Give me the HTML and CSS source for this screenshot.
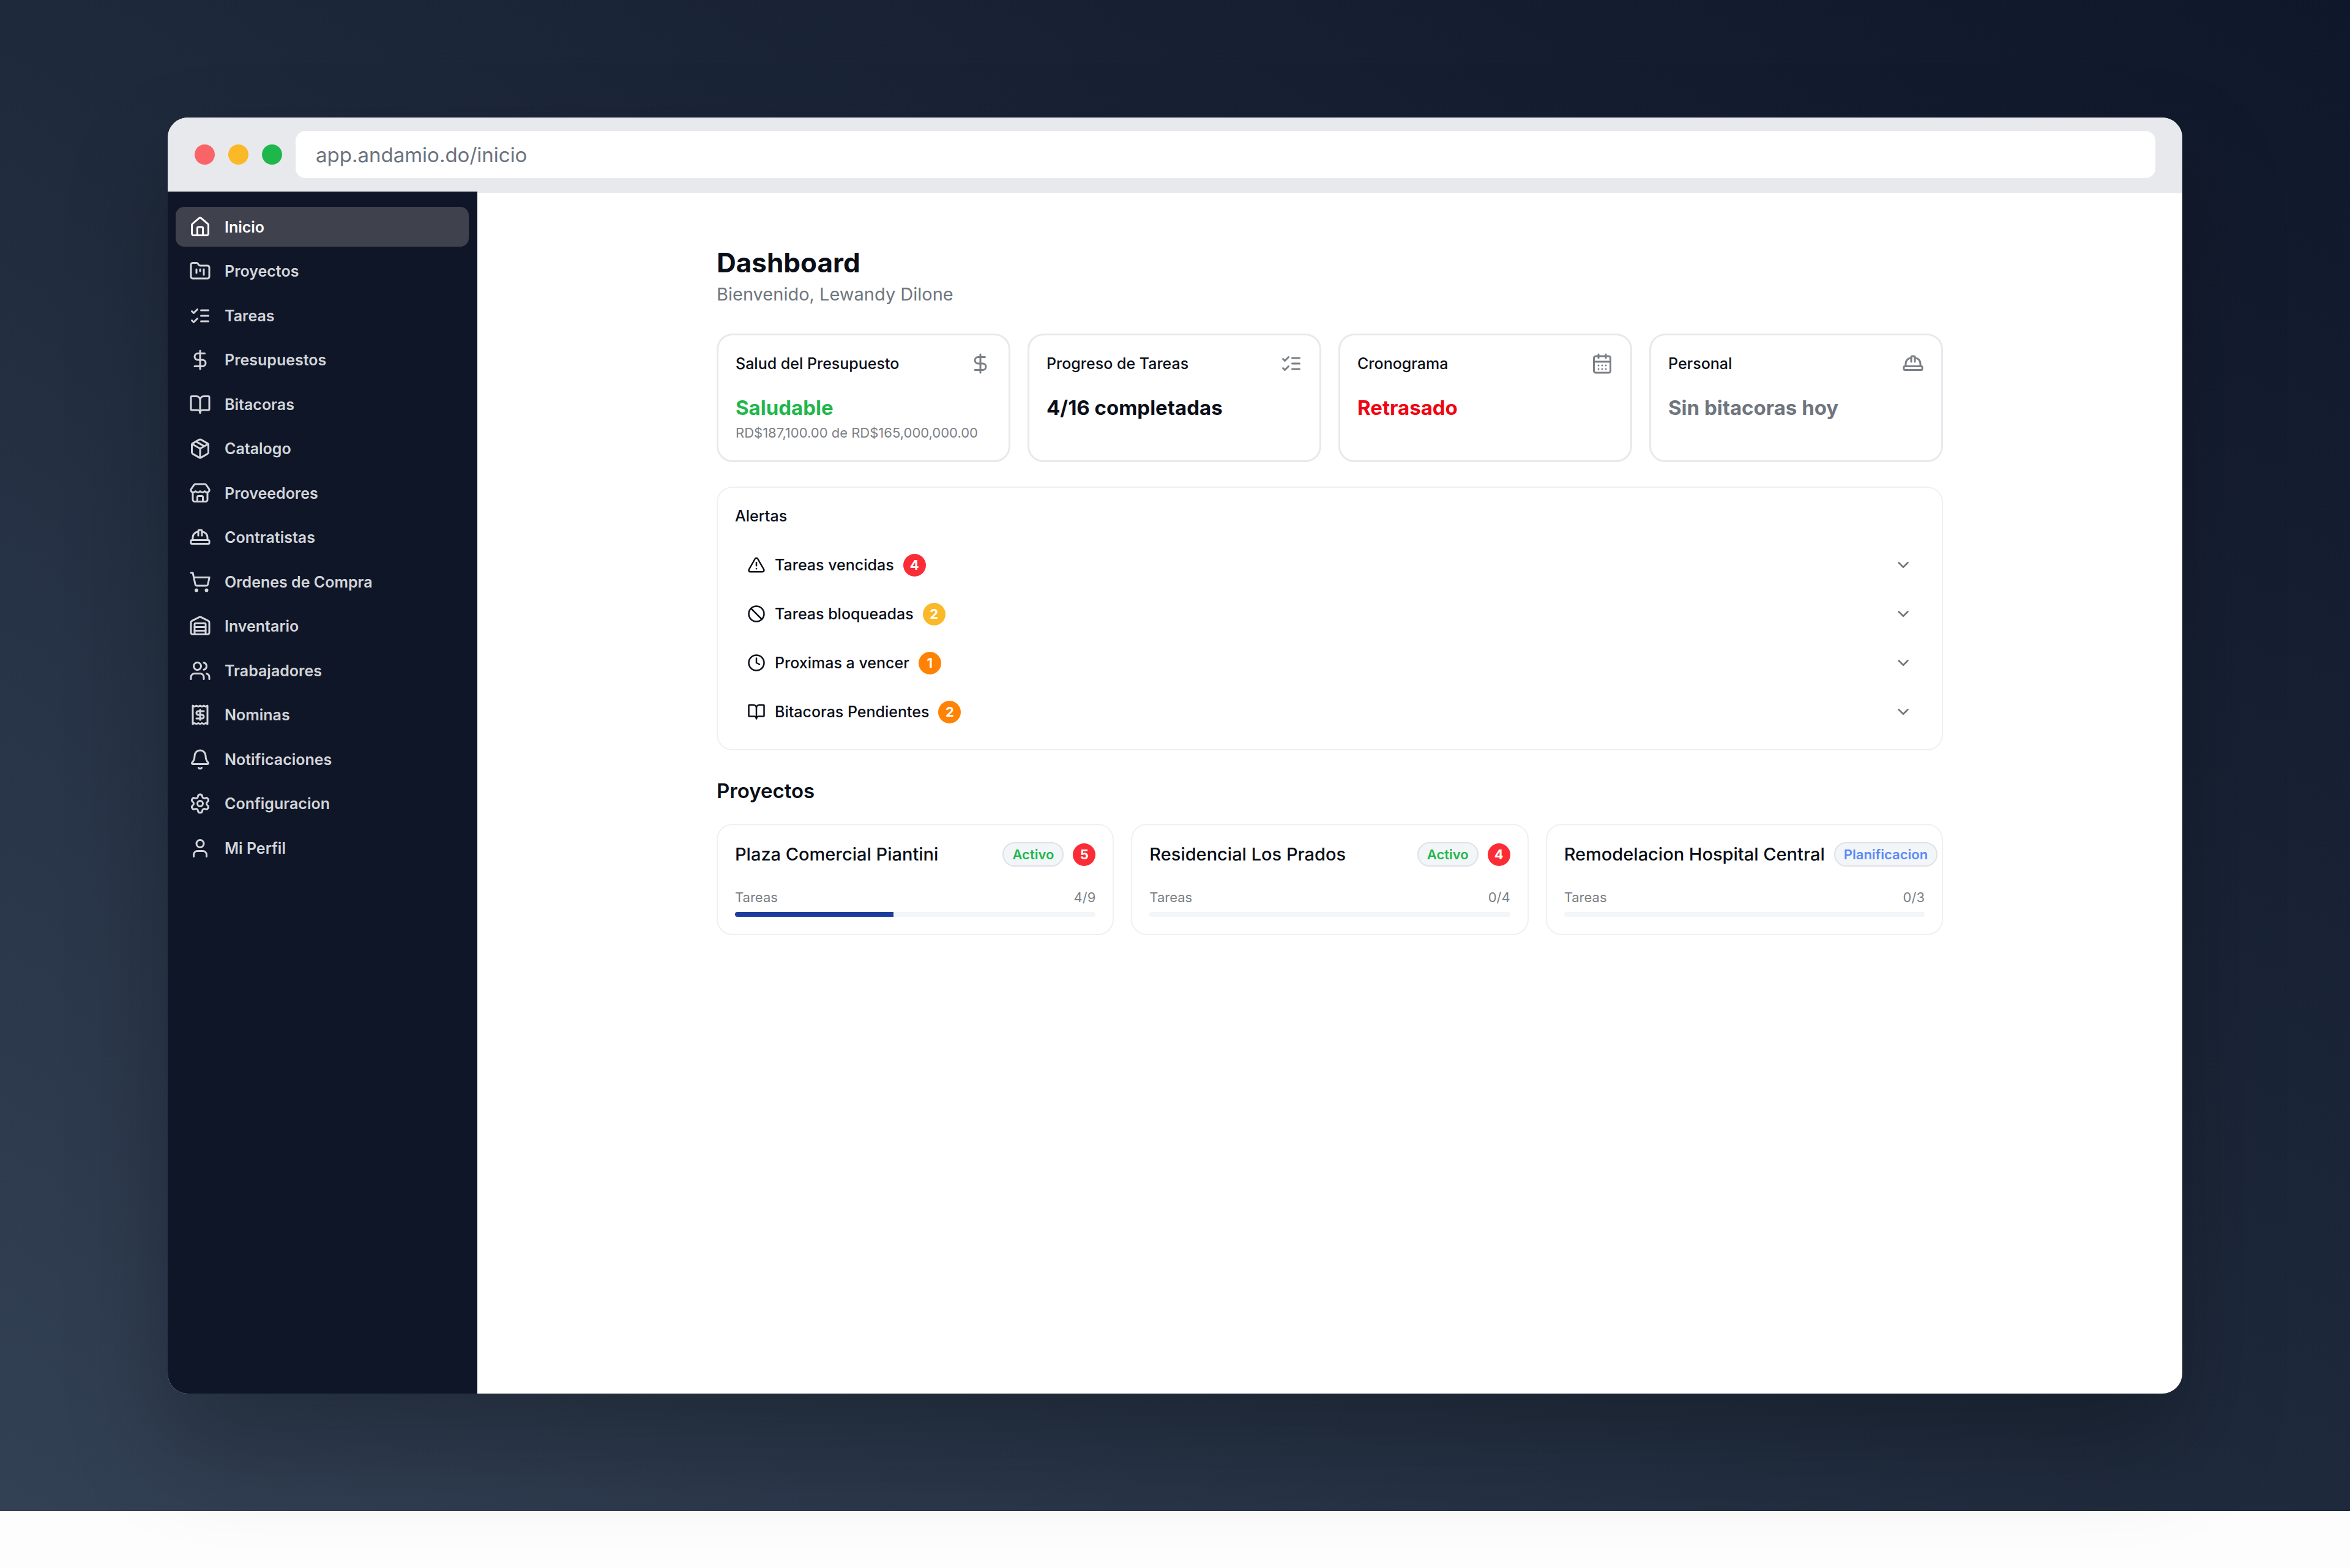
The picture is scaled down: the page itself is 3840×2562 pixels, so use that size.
FILE: index.html
```html
<!DOCTYPE html>
<html lang="es">
<head>
  <meta charset="UTF-8">
  <meta name="viewport" content="width=device-width, initial-scale=1.0">
  <title>Andamio - Inicio</title>
  <link rel="stylesheet" href="styles.css">
</head>
<body>
  <!-- Iconos compartidos -->
  <svg class="sprite" aria-hidden="true">
    <symbol id="i-house" viewBox="0 0 24 24"><path d="M15 21v-8a1 1 0 0 0-1-1h-4a1 1 0 0 0-1 1v8"/><path d="M3 10a2 2 0 0 1 .709-1.528l7-5.999a2 2 0 0 1 2.582 0l7 5.999A2 2 0 0 1 21 10v9a2 2 0 0 1-2 2H5a2 2 0 0 1-2-2z"/></symbol>
    <symbol id="i-folder" viewBox="0 0 24 24"><path d="M4 20h16a2 2 0 0 0 2-2V8a2 2 0 0 0-2-2h-7.93a2 2 0 0 1-1.66-.9l-.82-1.2A2 2 0 0 0 7.93 3H4a2 2 0 0 0-2 2v13c0 1.1.9 2 2 2Z"/><path d="M8 10v4"/><path d="M12 10v2"/><path d="M16 10v6"/></symbol>
    <symbol id="i-list" viewBox="0 0 24 24"><path d="m3 17 2 2 4-4"/><path d="m3 7 2 2 4-4"/><path d="M13 6h8"/><path d="M13 12h8"/><path d="M13 18h8"/></symbol>
    <symbol id="i-dollar" viewBox="0 0 24 24"><path d="M12 2v20"/><path d="M17 5H9.500a3.500 3.500 0 0 0 0 7h5a3.500 3.500 0 0 1 0 7H6"/></symbol>
    <symbol id="i-book" viewBox="0 0 24 24"><path d="M12 7v14"/><path d="M3 18a1 1 0 0 1-1-1V4a1 1 0 0 1 1-1h5a4 4 0 0 1 4 4 4 4 0 0 1 4-4h5a1 1 0 0 1 1 1v13a1 1 0 0 1-1 1h-6a3 3 0 0 0-3 3 3 3 0 0 0-3-3z"/></symbol>
    <symbol id="i-package" viewBox="0 0 24 24"><path d="M11 21.730a2 2 0 0 0 2 0l7-4A2 2 0 0 0 21 16V8a2 2 0 0 0-1-1.730l-7-4a2 2 0 0 0-2 0l-7 4A2 2 0 0 0 3 8v8a2 2 0 0 0 1 1.730z"/><path d="M12 22V12"/><path d="m3.300 7 8.700 5 8.700-5"/><path d="m7.500 4.270 9 5.150"/></symbol>
    <symbol id="i-store" viewBox="0 0 24 24"><path d="M15 21v-5a1 1 0 0 0-1-1h-4a1 1 0 0 0-1 1v5"/><path d="M17.774 10.310a1.120 1.120 0 0 0-1.549 0 2.500 2.500 0 0 1-3.451 0 1.120 1.120 0 0 0-1.548 0 2.500 2.500 0 0 1-3.452 0 1.120 1.120 0 0 0-1.549 0 2.500 2.500 0 0 1-3.770-3.248l2.889-4.184A2 2 0 0 1 7 2h10a2 2 0 0 1 1.653.873l2.895 4.192a2.500 2.500 0 0 1-3.774 3.244"/><path d="M4 10.950V19a2 2 0 0 0 2 2h12a2 2 0 0 0 2-2v-8.050"/></symbol>
    <symbol id="i-hat" viewBox="0 0 24 24"><path d="M10 10V5a1 1 0 0 1 1-1h2a1 1 0 0 1 1 1v5"/><path d="M14 6a6 6 0 0 1 6 6v3"/><path d="M4 15v-3a6 6 0 0 1 6-6"/><rect x="2" y="15" width="20" height="4" rx="1"/></symbol>
    <symbol id="i-cart" viewBox="0 0 24 24"><circle cx="8" cy="21" r="1"/><circle cx="19" cy="21" r="1"/><path d="M2.050 2.050h2l2.660 12.420a2 2 0 0 0 2 1.580h9.780a2 2 0 0 0 1.950-1.570l1.650-7.430H5.120"/></symbol>
    <symbol id="i-warehouse" viewBox="0 0 24 24"><path d="M18 21V10a1 1 0 0 0-1-1H7a1 1 0 0 0-1 1v11"/><path d="M22 19a2 2 0 0 1-2 2H4a2 2 0 0 1-2-2V8a2 2 0 0 1 1.132-1.803l7.950-3.974a2 2 0 0 1 1.837 0l7.948 3.974A2 2 0 0 1 22 8z"/><path d="M6 13h12"/><path d="M6 17h12"/></symbol>
    <symbol id="i-users" viewBox="0 0 24 24"><path d="M16 21v-2a4 4 0 0 0-4-4H6a4 4 0 0 0-4 4v2"/><path d="M16 3.128a4 4 0 0 1 0 7.744"/><path d="M22 21v-2a4 4 0 0 0-3-3.870"/><circle cx="9" cy="7" r="4"/></symbol>
    <symbol id="i-receipt" viewBox="0 0 24 24"><path d="M4 2v20l2-1 2 1 2-1 2 1 2-1 2 1 2-1 2 1V2l-2 1-2-1-2 1-2-1-2 1-2-1-2 1Z"/><path d="M16 8h-6a2 2 0 1 0 0 4h4a2 2 0 1 1 0 4H8"/><path d="M12 17.500v-11"/></symbol>
    <symbol id="i-bell" viewBox="0 0 24 24"><path d="M10.268 21a2 2 0 0 0 3.464 0"/><path d="M3.262 15.326A1 1 0 0 0 4 17h16a1 1 0 0 0 .740-1.673C19.410 13.956 18 12.499 18 8A6 6 0 0 0 6 8c0 4.499-1.411 5.956-2.738 7.326"/></symbol>
    <symbol id="i-gear" viewBox="0 0 24 24"><path d="M9.671 4.136a2.340 2.340 0 0 1 4.659 0 2.340 2.340 0 0 0 3.319 1.915 2.340 2.340 0 0 1 2.330 4.033 2.340 2.340 0 0 0 0 3.831 2.340 2.340 0 0 1-2.330 4.033 2.340 2.340 0 0 0-3.319 1.915 2.340 2.340 0 0 1-4.659 0 2.340 2.340 0 0 0-3.320-1.915 2.340 2.340 0 0 1-2.330-4.033 2.340 2.340 0 0 0 0-3.831A2.340 2.340 0 0 1 6.350 6.051a2.340 2.340 0 0 0 3.319-1.915"/><circle cx="12" cy="12" r="3"/></symbol>
    <symbol id="i-user" viewBox="0 0 24 24"><path d="M19 21v-2a4 4 0 0 0-4-4H9a4 4 0 0 0-4 4v2"/><circle cx="12" cy="7" r="4"/></symbol>
    <symbol id="i-calendar" viewBox="0 0 24 24"><path d="M8 2v4"/><path d="M16 2v4"/><rect x="3" y="4" width="18" height="18" rx="2"/><path d="M3 10h18"/><path d="M8 14h.01"/><path d="M12 14h.01"/><path d="M16 14h.01"/><path d="M8 18h.01"/><path d="M12 18h.01"/><path d="M16 18h.01"/></symbol>
    <symbol id="i-alert" viewBox="0 0 24 24"><path d="m21.730 18-8-14a2 2 0 0 0-3.480 0l-8 14A2 2 0 0 0 4 21h16a2 2 0 0 0 1.730-3"/><path d="M12 9v4"/><path d="M12 17h.01"/></symbol>
    <symbol id="i-ban" viewBox="0 0 24 24"><circle cx="12" cy="12" r="10"/><path d="m4.900 4.900 14.200 14.200"/></symbol>
    <symbol id="i-clock" viewBox="0 0 24 24"><circle cx="12" cy="12" r="10"/><path d="M12 6v6l4 2"/></symbol>
    <symbol id="i-chevron" viewBox="0 0 24 24"><path d="m6 9 6 6 6-6"/></symbol>
  </svg>

  <div class="stage">
    <div class="window">
      <div class="titlebar">
        <span class="dot red"></span>
        <span class="dot yellow"></span>
        <span class="dot green"></span>
        <input class="address" type="text" aria-label="Direccion" value="app.andamio.do/inicio">
      </div>

      <div class="app">
        <nav class="sidebar">
          <ul class="nav-list">
            <li><a class="nav-link active" href="#"><svg class="icon"><use href="#i-house"/></svg>Inicio</a></li>
            <li><a class="nav-link" href="#"><svg class="icon"><use href="#i-folder"/></svg>Proyectos</a></li>
            <li><a class="nav-link" href="#"><svg class="icon"><use href="#i-list"/></svg>Tareas</a></li>
            <li><a class="nav-link" href="#"><svg class="icon"><use href="#i-dollar"/></svg>Presupuestos</a></li>
            <li><a class="nav-link" href="#"><svg class="icon"><use href="#i-book"/></svg>Bitacoras</a></li>
            <li><a class="nav-link" href="#"><svg class="icon"><use href="#i-package"/></svg>Catalogo</a></li>
            <li><a class="nav-link" href="#"><svg class="icon"><use href="#i-store"/></svg>Proveedores</a></li>
            <li><a class="nav-link" href="#"><svg class="icon"><use href="#i-hat"/></svg>Contratistas</a></li>
            <li><a class="nav-link" href="#"><svg class="icon"><use href="#i-cart"/></svg>Ordenes de Compra</a></li>
            <li><a class="nav-link" href="#"><svg class="icon"><use href="#i-warehouse"/></svg>Inventario</a></li>
            <li><a class="nav-link" href="#"><svg class="icon"><use href="#i-users"/></svg>Trabajadores</a></li>
            <li><a class="nav-link" href="#"><svg class="icon"><use href="#i-receipt"/></svg>Nominas</a></li>
            <li><a class="nav-link" href="#"><svg class="icon"><use href="#i-bell"/></svg>Notificaciones</a></li>
            <li><a class="nav-link" href="#"><svg class="icon"><use href="#i-gear"/></svg>Configuracion</a></li>
            <li><a class="nav-link" href="#"><svg class="icon"><use href="#i-user"/></svg>Mi Perfil</a></li>
          </ul>
        </nav>

        <main class="main">
          <div class="content">
            <header class="page-head">
              <h1>Dashboard</h1>
              <p>Bienvenido, Lewandy Dilone</p>
            </header>

            <section class="stats">
              <article class="stat">
                <div class="stat-head"><h2>Salud del Presupuesto</h2><svg class="icon"><use href="#i-dollar"/></svg></div>
                <p class="stat-value ok">Saludable</p>
                <p class="stat-note">RD$187,100.00 de RD$165,000,000.00</p>
              </article>
              <article class="stat">
                <div class="stat-head"><h2>Progreso de Tareas</h2><svg class="icon"><use href="#i-list"/></svg></div>
                <p class="stat-value">4/16 completadas</p>
              </article>
              <article class="stat">
                <div class="stat-head"><h2>Cronograma</h2><svg class="icon"><use href="#i-calendar"/></svg></div>
                <p class="stat-value late">Retrasado</p>
              </article>
              <article class="stat">
                <div class="stat-head"><h2>Personal</h2><svg class="icon"><use href="#i-hat"/></svg></div>
                <p class="stat-value muted">Sin bitacoras hoy</p>
              </article>
            </section>

            <section class="alerts">
              <h2>Alertas</h2>
              <button class="alert" type="button"><svg class="icon small"><use href="#i-alert"/></svg>Tareas vencidas<span class="count red">4</span><svg class="icon small chevron"><use href="#i-chevron"/></svg></button>
              <button class="alert" type="button"><svg class="icon small"><use href="#i-ban"/></svg>Tareas bloqueadas<span class="count yellow">2</span><svg class="icon small chevron"><use href="#i-chevron"/></svg></button>
              <button class="alert" type="button"><svg class="icon small"><use href="#i-clock"/></svg>Proximas a vencer<span class="count orange">1</span><svg class="icon small chevron"><use href="#i-chevron"/></svg></button>
              <button class="alert" type="button"><svg class="icon small"><use href="#i-book"/></svg>Bitacoras Pendientes<span class="count orange">2</span><svg class="icon small chevron"><use href="#i-chevron"/></svg></button>
            </section>

            <h2 class="section-title">Proyectos</h2>
            <section class="projects">
              <article class="project">
                <div class="project-head">
                  <h3>Plaza Comercial Piantini</h3>
                  <span class="status">Activo</span>
                  <span class="count red">5</span>
                </div>
                <div class="project-tasks"><span>Tareas</span><span>4/9</span></div>
                <div class="bar"><div class="bar-fill" style="width: 44%"></div></div>
              </article>
              <article class="project">
                <div class="project-head">
                  <h3>Residencial Los Prados</h3>
                  <span class="status">Activo</span>
                  <span class="count red">4</span>
                </div>
                <div class="project-tasks"><span>Tareas</span><span>0/4</span></div>
                <div class="bar"><div class="bar-fill" style="width: 0%"></div></div>
              </article>
              <article class="project">
                <div class="project-head">
                  <h3>Remodelacion Hospital Central</h3>
                  <span class="status planning">Planificacion</span>
                </div>
                <div class="project-tasks"><span>Tareas</span><span>0/3</span></div>
                <div class="bar"><div class="bar-fill" style="width: 0%"></div></div>
              </article>
            </section>
          </div>
        </main>
      </div>
    </div>
  </div>
</body>
</html>
```
FILE: styles.css
```css
* {
  margin: 0;
  padding: 0;
  box-sizing: border-box;
}

body {
  min-height: 100vh;
  padding-bottom: 93px;
  display: flex;
  flex-direction: column;
  background: #fdfdfd;
  color: #0a0e17;
  font-family: Inter, "Liberation Sans", sans-serif;
  font-size: 25px;
  line-height: 36px;
}

.sprite {
  display: none;
}

.stage {
  flex: 1;
  display: flex;
  padding: 192px 274px;
  background: linear-gradient(to top right, #334155 0%, #1e293b 50%, #0f172a 100%);
}

.window {
  flex: 1;
  display: flex;
  flex-direction: column;
  border-radius: 33px;
  overflow: hidden;
  background: #fff;
  box-shadow: 0 82px 164px rgba(0, 0, 0, 0.25);
}

/* Barra del navegador */
.titlebar {
  display: flex;
  align-items: center;
  gap: 22px;
  padding: 22px 44px;
  background: #e8e9ed;
}

.dot {
  width: 33px;
  height: 33px;
  border-radius: 50%;
}

.dot.red {
  background: #fb6467;
}

.dot.yellow {
  background: #fbb827;
}

.dot.green {
  background: #1fb74b;
}

.address {
  flex: 1;
  height: 77px;
  padding: 0 33px;
  border: none;
  border-radius: 16px;
  background: #fff;
  color: #6b7280;
  font-family: inherit;
  font-size: 33px;
}

.app {
  flex: 1;
  display: flex;
}

/* Menu lateral */
.sidebar {
  width: 506px;
  padding: 25px 14px 25px 13px;
  background: #0f1628;
}

.nav-list {
  height: 1080px;
  display: flex;
  flex-direction: column;
  justify-content: space-between;
  list-style: none;
}

.nav-link {
  height: 65px;
  padding: 0 22px;
  display: flex;
  align-items: center;
  gap: 22px;
  border-radius: 14px;
  color: #d3d5d9;
  font-weight: 600;
  text-decoration: none;
}

.nav-link.active {
  background: #3f414d;
  color: #fff;
}

.icon {
  width: 36px;
  height: 36px;
  flex-shrink: 0;
  fill: none;
  stroke: currentColor;
  stroke-width: 2;
  stroke-linecap: round;
  stroke-linejoin: round;
}

.icon.small {
  width: 30px;
  height: 30px;
}

/* Contenido */
.main {
  flex: 1;
  border-top: 2px solid #e8e9ed;
  padding: 86px 40px;
}

.content {
  max-width: 2004px;
  margin: 0 auto;
}

.page-head h1 {
  font-size: 44px;
  line-height: 56px;
  font-weight: 700;
}

.page-head p {
  font-size: 29px;
  line-height: 48px;
  color: #6f757d;
}

.stats {
  display: grid;
  grid-template-columns: repeat(4, 1fr);
  gap: 28px;
  margin-top: 40px;
}

.stat {
  min-height: 210px;
  padding: 28px;
  border: 3px solid #e7e9ed;
  border-radius: 26px;
}

.stat-head {
  display: flex;
  justify-content: space-between;
  align-items: center;
  color: #7b7f86;
}

.stat-head h2,
.alerts h2 {
  font-size: 25px;
  font-weight: 500;
  color: #0a0e17;
}

.stat-value {
  margin-top: 32px;
  font-size: 33px;
  line-height: 44px;
  font-weight: 700;
}

.stat-value.ok {
  color: #1fb74b;
}

.stat-value.late {
  color: #ee0412;
}

.stat-value.muted {
  color: #6f757d;
}

.stat-note {
  margin-top: 3px;
  font-size: 22px;
  line-height: 32px;
  color: #7b7f86;
}

.alerts {
  margin-top: 40px;
  padding: 28px 28px 21px;
  border: 2px solid #eef1f3;
  border-radius: 26px;
}

.alerts h2 {
  margin-bottom: 22px;
}

.alert {
  width: 100%;
  height: 80px;
  padding: 0 20px;
  display: flex;
  align-items: center;
  gap: 15px;
  border: none;
  background: none;
  color: #0a0e17;
  font-family: inherit;
  font-size: 25px;
  font-weight: 500;
  cursor: pointer;
}

.chevron {
  margin-left: auto;
  color: #6f757d;
}

.count {
  width: 37px;
  height: 37px;
  display: flex;
  align-items: center;
  justify-content: center;
  border-radius: 50%;
  color: #fff;
  font-size: 22px;
  font-weight: 700;
}

.count.red {
  background: #fb2c36;
}

.count.yellow {
  background: #fbb827;
}

.count.orange {
  background: #ff8204;
}

.section-title {
  margin: 44px 0 32px;
  font-size: 33px;
  line-height: 44px;
  font-weight: 600;
}

.projects {
  display: grid;
  grid-template-columns: repeat(3, minmax(0, 1fr));
  gap: 28px;
}

.project {
  padding: 28px;
  border: 2px solid #eef1f3;
  border-radius: 26px;
}

.project-head {
  display: flex;
  align-items: center;
  gap: 15px;
}

.project-head h3 {
  flex: 1 0 auto;
  font-size: 29px;
  line-height: 40px;
  font-weight: 500;
  white-space: nowrap;
}

.status {
  height: 40px;
  padding: 0 14px;
  display: flex;
  align-items: center;
  border: 2px solid #dfe2e5;
  border-radius: 20px;
  background: #f2f6f8;
  color: #1fb74b;
  font-size: 22px;
  font-weight: 600;
}

.status.planning {
  color: #5b8af8;
}

.project-tasks {
  display: flex;
  justify-content: space-between;
  margin-top: 34px;
  font-size: 22px;
  line-height: 32px;
  color: #7b7f86;
}

.bar {
  height: 8px;
  margin-top: 8px;
  border-radius: 4px;
  background: #f2f6f8;
  overflow: hidden;
}

.bar-fill {
  height: 100%;
  background: #1c3d9c;
}
```
